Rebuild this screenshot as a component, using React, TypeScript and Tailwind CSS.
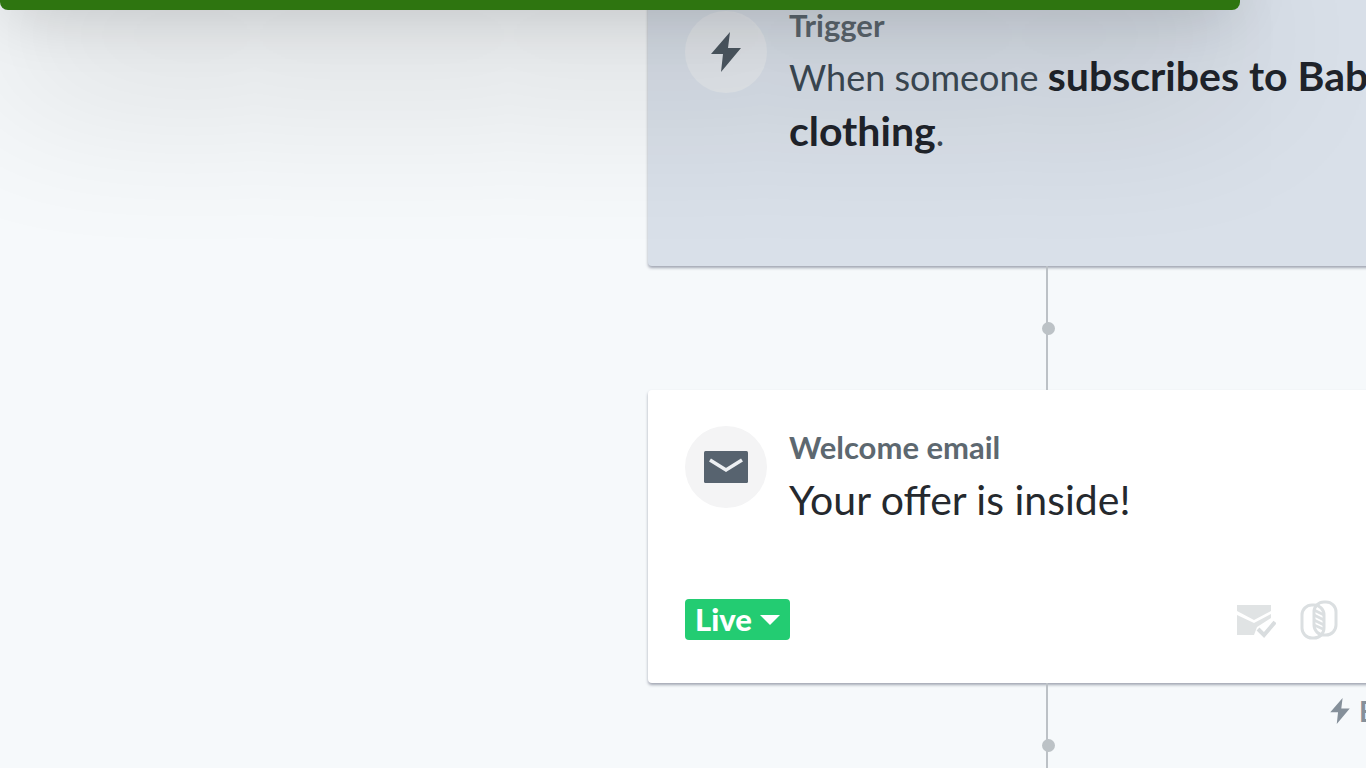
import type { ReactNode } from "react"

const BoltIcon = ({ className }: { className: string }) => (
    <svg viewBox="0 0 30 40" className={className} fill="currentColor" aria-hidden="true">
        <path d="M19 0 0 22h12L10 40 30 16H17z" />
    </svg>
)

const MailIcon = () => (
    <svg viewBox="0 0 44 32" className="h-8 w-11" aria-hidden="true">
        <rect width="44" height="32" rx="1.5" fill="#57636f" />
        <path d="M6 9l16 10L38 9" fill="none" stroke="#edf0f3" strokeWidth="3.6" />
    </svg>
)

const MailCheckIcon = () => (
    <svg viewBox="0 0 40 36" className="h-9 w-10" aria-hidden="true">
        <path d="M1 3h34v6L18 18 1 9z" fill="#e0e3e4" />
        <path d="M1 13l17 8 17-9v4L21 25l-3 8H1z" fill="#e0e3e4" />
        <path d="M22 27l6 6 11-13" fill="none" stroke="#d9dddf" strokeWidth="4" />
    </svg>
)

const SmartSendIcon = () => (
    <svg viewBox="0 0 38 40" className="h-10 w-[38px]" fill="none" stroke="#dbdfe1" aria-hidden="true">
        <rect x="2" y="5" width="22" height="33" rx="10" strokeWidth="3" />
        <rect x="14" y="2" width="22" height="33" rx="10" strokeWidth="3" />
        <path d="M14 10l10 5M14 15l10 5M14 20l10 5M14 25l9 4" strokeWidth="2.6" />
    </svg>
)

const Connector = ({ children }: { children?: ReactNode }) => (
    <div className="relative flex h-[124px] justify-center">
        <div className="w-[2px] bg-[#bcc1c6]" />
        <span className="absolute top-14 left-1/2 ml-[-5px] size-[13px] rounded-full bg-[#bcc2c6]" />
        {children}
    </div>
)

const StepCard = ({
    icon,
    label,
    children,
    footer,
    className
}: {
    icon: ReactNode,
    label: string,
    children: ReactNode,
    footer?: ReactNode,
    className: string
}) => {
    return <article className={`flex flex-col justify-between rounded-[4px] px-[37px] pb-[43px] shadow-[0_2px_3px_rgba(60,66,90,0.45)] ${className}`}>
        <div className="flex gap-[22px]">
            {icon}
            <div className="min-w-0 flex-1">
                <h2 className="text-[31px] leading-[34px] font-bold text-[#5d6870]">{label}</h2>
                {children}
            </div>
        </div>
        {footer}
    </article>
}

export default function App() {
    return <div className="relative h-screen overflow-hidden bg-[#f6f9fb] font-['Lato','Liberation_Sans',sans-serif]">
        <main className="-mt-8 grid grid-cols-[648px_798px]">
            <div className="col-start-2">
                <StepCard
                    className="min-h-[298px] bg-[#d9e0e9] pt-10"
                    label="Trigger"
                    icon={<div className="mt-[3px] flex size-[82px] shrink-0 items-center justify-center rounded-full bg-[#e4e8ed] text-[#4d5963]">
                        <BoltIcon className="h-10 w-[30px]" />
                    </div>}
                >
                    <p className="mt-2 text-[36px] leading-[55px] text-[#3c4954]">
                        When someone <strong className="text-[41px] leading-none font-bold text-[#20242b]">subscribes to Baby clothing</strong>.
                    </p>
                </StepCard>
                <Connector />
                <StepCard
                    className="min-h-[293px] bg-white pt-10"
                    label="Welcome email"
                    icon={<div className="-mt-1 flex size-[82px] shrink-0 items-center justify-center rounded-full bg-[#f4f4f5]">
                        <MailIcon />
                    </div>}
                    footer={<div className="flex items-center justify-between pr-[71px]">
                        <button className="flex h-[41px] w-[105px] items-center justify-center gap-2 rounded-[4px] bg-[#23cc72] text-[31px] font-black text-white">
                            Live
                            <svg viewBox="0 0 20 10" className="h-[10px] w-5" fill="currentColor" aria-hidden="true">
                                <path d="M0 0h20L10 10z" />
                            </svg>
                        </button>
                        <div className="flex items-center gap-6">
                            <MailCheckIcon />
                            <SmartSendIcon />
                        </div>
                    </div>}
                >
                    <p className="mt-2 text-[41px] leading-[55px] text-[#25292e]">Your offer is inside!</p>
                </StepCard>
                <Connector>
                    <div className="absolute top-3 right-[57px] flex items-center gap-2 text-[28px] leading-8 text-[#85909a]">
                        <BoltIcon className="h-[26px] w-[22px]" />
                        <span className="w-[30px] font-bold">E</span>
                    </div>
                </Connector>
            </div>
        </main>
        <div className="absolute -top-20 right-[126px] left-0 h-[90px] rounded-b-[8px] bg-[#2e7510] shadow-[0_70px_170px_rgba(0,0,0,0.16),0_16px_60px_-10px_rgba(0,0,0,0.16)]" />
    </div>
}
